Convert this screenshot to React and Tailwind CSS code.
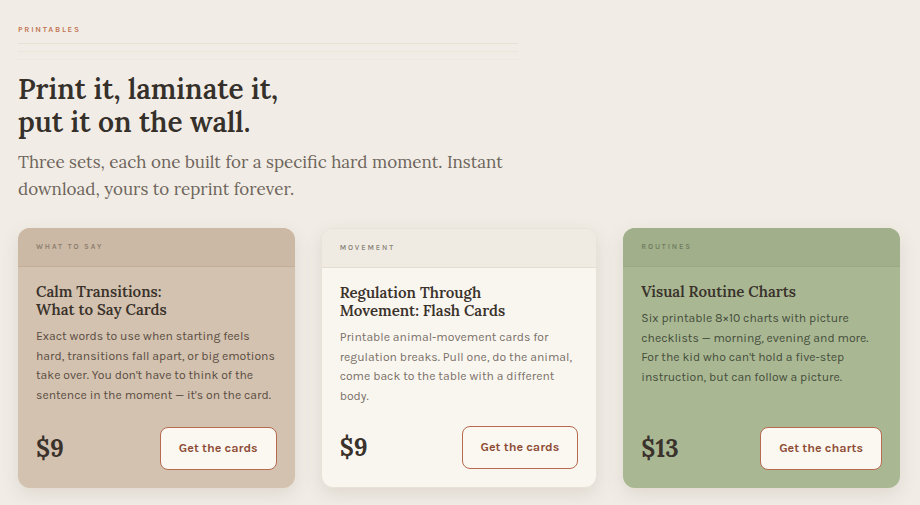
import React from 'react';

const products = [
  {
    tag: 'What to say',
    title: ['Calm Transitions:', 'What to Say Cards'],
    description:
      "Exact words to use when starting feels hard, transitions fall apart, or big emotions take over. You don't have to think of the sentence in the moment — it's on the card.",
    price: '$9',
    cta: 'Get the cards',
    card: 'bg-[#d3c2b0]',
    head: 'bg-[#cbb9a6] border-[#c2af9b]',
    tagColor: 'text-[#8a7a6a]',
    text: 'text-[#5a4d42]',
  },
  {
    tag: 'Movement',
    title: ['Regulation Through', 'Movement: Flash Cards'],
    description:
      'Printable animal-movement cards for regulation breaks. Pull one, do the animal, come back to the table with a different body.',
    price: '$9',
    cta: 'Get the cards',
    card: 'bg-[#f9f6f0] border border-[#e8e2d8]',
    head: 'bg-[#efebe3] border-[#e3ddd2]',
    tagColor: 'text-[#8c847a]',
    text: 'text-[#7a7168]',
  },
  {
    tag: 'Routines',
    title: ['Visual Routine Charts'],
    description:
      "Six printable 8×10 charts with picture checklists — morning, evening and more. For the kid who can't hold a five-step instruction, but can follow a picture.",
    price: '$13',
    cta: 'Get the charts',
    card: 'bg-[#a9b893]',
    head: 'bg-[#a1b08a] border-[#9aa983]',
    tagColor: 'text-[#6f7b60]',
    text: 'text-[#454d3b]',
  },
];

const serif = "font-['Lora','Liberation_Serif',serif]";
const sans = "font-['Karla','Noto_Sans',sans-serif]";

export default function App() {
  return (
    <div className={`min-h-screen bg-[#f1ede6] pl-[18px] pr-[20px] pt-[24px] pb-4 ${sans}`}>
      <p className="text-[8px] font-semibold tracking-[0.22em] uppercase text-[#c0714f]">Printables</p>
      <div className="mt-[7px] w-[500px] flex flex-col gap-[7px]">
        <div className="h-px bg-[#e8e1d5]" />
        <div className="h-px bg-[#ebe5da]" />
        <div className="h-px bg-[#eee9e0]" />
      </div>

      <h1 className={`mt-[13px] ${serif} text-[28px] leading-[33px] font-semibold text-[#36302b]`}>
        Print it, laminate it,
        <br />
        put it on the wall.
      </h1>
      <p className={`mt-[10px] ${serif} text-[17px] leading-[27px] text-[#6e655c] w-[500px]`}>
        Three sets, each one built for a specific hard moment. Instant download, yours to reprint forever.
      </p>

      <div className="mt-[25px] grid grid-cols-3 gap-[26px]">
        {products.map((p) => (
          <div
            key={p.tag}
            className={`${p.card} h-[260px] rounded-[12px] overflow-hidden flex flex-col shadow-[0_6px_18px_rgba(90,70,50,0.13)]`}
          >
            <div className={`${p.head} h-[39px] border-b flex items-center px-[18px]`}>
              <span className={`text-[7.5px] font-semibold uppercase tracking-[0.25em] ${p.tagColor}`}>{p.tag}</span>
            </div>
            <div className="flex-1 flex flex-col px-[18px] pt-[16px] pb-[18px]">
              <h3 className={`${serif} text-[15px] leading-[18px] font-semibold text-[#3a322b]`}>
                {p.title.map((t) => (
                  <span key={t} className="block">{t}</span>
                ))}
              </h3>
              <p className={`mt-[8px] text-[12.2px] leading-[19.7px] ${p.text}`}>{p.description}</p>
              <div className="mt-auto flex items-center justify-between">
                <span className={`${serif} text-[24px] leading-none font-bold text-[#3a322b]`}>{p.price}</span>
                <button className="h-[43px] px-[18px] rounded-[8px] border-[1.5px] border-[#b66a50] bg-[#fbf7f1] text-[12.5px] font-bold text-[#8d4c35]">
                  {p.cta}
                </button>
              </div>
            </div>
          </div>
        ))}
      </div>
    </div>
  );
}
